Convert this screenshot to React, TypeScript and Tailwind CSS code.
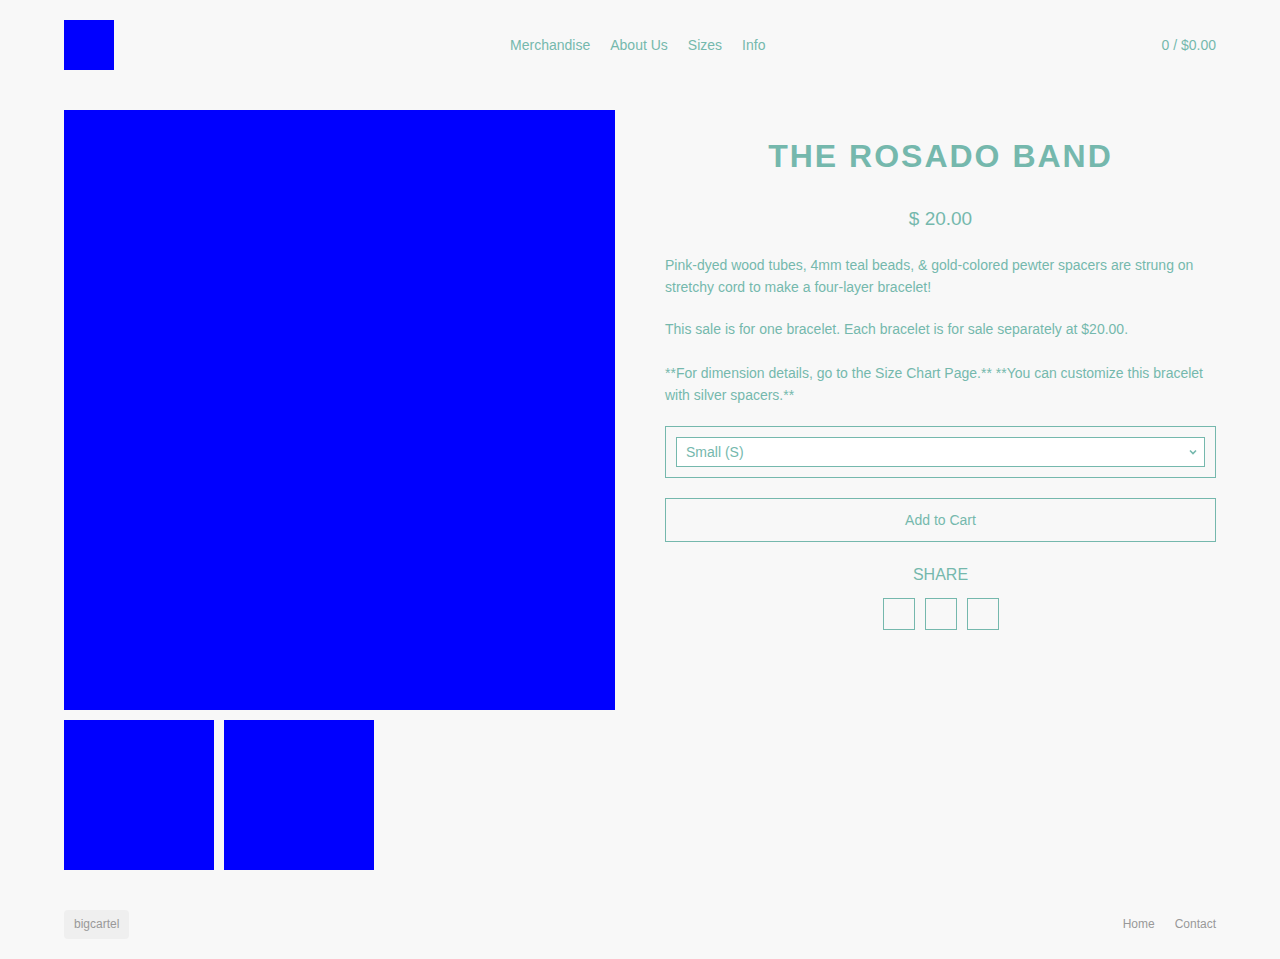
export default function App() {
  return (
    <div className="min-h-screen bg-[#f8f8f8] text-[#75b8ad] font-['Liberation_Sans',Arial,sans-serif]">
      <div className="mx-auto w-[1152px]">
        {/* Header */}
        <header className="flex items-center justify-between pt-5 h-[70px]">
          <div className="w-[50px] h-[50px] bg-[#0000ff]" />
          <nav className="flex gap-5 text-sm">
            <a>Merchandise</a>
            <a>About Us</a>
            <a>Sizes</a>
            <a>Info</a>
          </nav>
          <div className="text-sm">0 / $0.00</div>
        </header>

        {/* Product */}
        <main className="flex gap-[50px] mt-10">
          <div className="w-[551px] shrink-0">
            <div className="w-[551px] h-[600px] bg-[#0000ff]" />
            <div className="flex gap-[10px] mt-[10px]">
              <div className="w-[150px] h-[150px] bg-[#0000ff]" />
              <div className="w-[150px] h-[150px] bg-[#0000ff]" />
            </div>
          </div>

          <div className="w-[551px] shrink-0">
            <h1 className="mt-[26px] text-center text-[32px] leading-[40px] font-bold tracking-[2px]">
              THE ROSADO BAND
            </h1>
            <div className="mt-[31px] text-center text-[19px] leading-[24px]">$ 20.00</div>
            <div className="mt-[23px] text-sm leading-[22px]">
              <p>
                Pink-dyed wood tubes, 4mm teal beads, &amp; gold-colored pewter spacers are strung on stretchy
                cord to make a four-layer bracelet!
              </p>
              <p className="mt-[20px]">
                This sale is for one bracelet. Each bracelet is for sale separately at $20.00.
              </p>
              <p className="mt-[22px]">
                **For dimension details, go to the Size Chart Page.** **You can customize this bracelet with
                silver spacers.**
              </p>
            </div>

            <div className="mt-[20px] border border-[#75b8ad] p-[10px]">
              <div className="flex items-center justify-between h-[30px] border border-[#75b8ad] bg-white pl-[9px] pr-[6px] text-sm">
                <span>Small (S)</span>
                <svg width="10" height="10" viewBox="0 0 10 10" fill="none" stroke="currentColor" strokeWidth="1.6">
                  <path d="M2 3.5 L5 6.5 L8 3.5" />
                </svg>
              </div>
            </div>

            <button className="mt-[20px] w-full h-[44px] border border-[#75b8ad] text-sm">Add to Cart</button>

            <div className="mt-[23px] text-center text-base leading-5">SHARE</div>
            <div className="mt-[13px] flex justify-center gap-[10px]">
              <div className="w-8 h-8 border border-[#75b8ad]" />
              <div className="w-8 h-8 border border-[#75b8ad]" />
              <div className="w-8 h-8 border border-[#75b8ad]" />
            </div>
          </div>
        </main>

        {/* Footer */}
        <footer className="flex items-center justify-between mt-10 pb-5 text-xs text-[#999999]">
          <div className="bg-[#efefef] rounded px-[10px] pb-[2px] h-[29px] flex items-center">bigcartel</div>
          <div className="flex gap-5 -mt-[2px]">
            <a>Home</a>
            <a>Contact</a>
          </div>
        </footer>
      </div>
    </div>
  );
}
